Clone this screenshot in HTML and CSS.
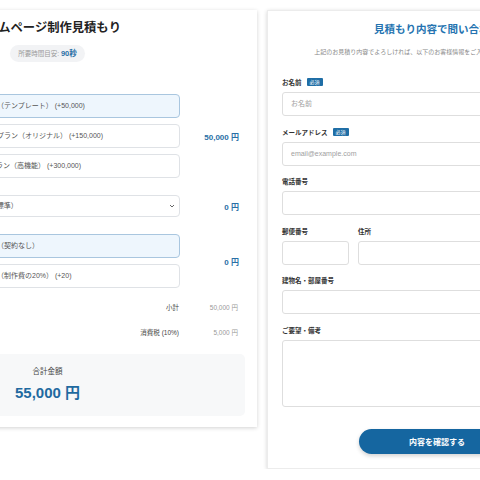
FILE: index.html
```html
<!DOCTYPE html>
<html lang="ja">
<head>
    <meta charset="UTF-8">
    <meta name="viewport" content="width=device-width, initial-scale=1.0">
    <title>ホームページ制作見積もり</title>
    <link rel="stylesheet" href="styles.css">
</head>
<body>
    <div class="page">
        <section class="card estimate">
            <header class="estimateHead">
                <h1>ホームページ制作見積もり</h1>
                <span class="timeBadge">所要時間目安: <b>90秒</b></span>
            </header>

            <div class="group">
                <div class="groupLabel">制作プラン</div>
                <div class="options">
                    <div class="option selected">ライトプラン（テンプレート） (+50,000)</div>
                    <div class="option">スタンダードプラン（オリジナル） (+150,000)</div>
                    <div class="option">プレミアムプラン（高機能） (+300,000)</div>
                </div>
                <div class="price">50,000 円</div>
            </div>

            <div class="group">
                <div class="groupLabel">スマホ対応</div>
                <div class="options">
                    <div class="option selectBox">
                        <span>スマホ対応（標準）</span>
                        <svg class="chevron" width="6" height="4" viewBox="0 0 6 4"><path d="M1 1l2 2 2-2" fill="none" stroke="#555" stroke-width="0.9"/></svg>
                    </div>
                </div>
                <div class="price">0 円</div>
            </div>

            <div class="group">
                <div class="groupLabel">保守・運用</div>
                <div class="options">
                    <div class="option selected">保守サポート（契約なし）</div>
                    <div class="option">月額保守契約（制作費の20%） (+20)</div>
                </div>
                <div class="price">0 円</div>
            </div>

            <div class="summary">
                <div class="sumRow"><span class="sumLabel">小計</span><span class="sumValue">50,000 円</span></div>
                <div class="sumRow"><span class="sumLabel">消費税 (10%)</span><span class="sumValue">5,000 円</span></div>
            </div>

            <div class="totalBox">
                <div class="totalLabel">合計金額</div>
                <div class="totalValue">55,000 円</div>
            </div>
        </section>

        <section class="card contact">
            <h2>見積もり内容で問い合わせ</h2>
            <p class="lead">上記のお見積り内容でよろしければ、以下のお客様情報をご入力のうえ送信してください。</p>

            <div class="field">
                <label>お名前 <span class="req">必須</span></label>
                <div class="input placeholder">お名前</div>
            </div>
            <div class="field">
                <label>メールアドレス <span class="req">必須</span></label>
                <div class="input placeholder">email@example.com</div>
            </div>
            <div class="field">
                <label>電話番号</label>
                <div class="input"></div>
            </div>
            <div class="fieldRow">
                <div class="field zip">
                    <label>郵便番号</label>
                    <div class="input"></div>
                </div>
                <div class="field address">
                    <label>住所</label>
                    <div class="input"></div>
                </div>
            </div>
            <div class="field">
                <label>建物名・部屋番号</label>
                <div class="input"></div>
            </div>
            <div class="field">
                <label>ご要望・備考</label>
                <div class="input textarea"></div>
            </div>

            <div class="actions">
                <button type="button" class="confirmBtn">内容を確認する</button>
            </div>
        </section>
    </div>
</body>
</html>
```

FILE: styles.css
```css
html, body {
    margin: 0;
    overflow: hidden;
    background-color: #ffffff;
}
body {
    font-family: "Liberation Sans", "Noto Sans CJK JP", sans-serif;
    color: #333;
}
.page {
    display: flex;
    align-items: flex-start;
    gap: 10px;
    padding-top: 10px;
    margin-left: -162px;
    width: 800px;
}
.card {
    background-color: #ffffff;
    box-shadow: 0 1px 4px rgba(0, 0, 0, 0.18);
    box-sizing: border-box;
    flex-shrink: 0;
}

/* Estimate card */
.estimate {
    width: 419px;
    padding: 10px 12px 11px;
}
.estimateHead {
    text-align: center;
}
.estimateHead h1 {
    margin: 0;
    font-size: 12.3px;
    line-height: 17px;
    font-weight: 600;
    color: #222;
}
.timeBadge {
    display: inline-block;
    margin-top: 8px;
    height: 17px;
    line-height: 17px;
    padding: 0 8px;
    border-radius: 9px;
    background-color: #f2f3f5;
    font-size: 6.5px;
    color: #999;
}
.timeBadge b {
    color: #2a6fa6;
    font-size: 7.5px;
}
.group {
    display: grid;
    grid-template-columns: 90px 234px 58px;
    column-gap: 6px;
    align-items: center;
    margin-top: 17px;
}
.group:first-of-type {
    margin-top: 32px;
}
.groupLabel {
    font-size: 7px;
    font-weight: 600;
    color: #333;
}
.options {
    display: flex;
    flex-direction: column;
    gap: 6px;
}
.option {
    height: 24px;
    line-height: 22px;
    box-sizing: border-box;
    border: 1px solid #dfe2e6;
    border-radius: 4px;
    padding: 0 8px;
    font-size: 7px;
    color: #555;
    white-space: nowrap;
    overflow: hidden;
}
.option.selected {
    background-color: #eef6fd;
    border-color: #a9c6df;
}
.selectBox {
    height: 22px;
    line-height: 20px;
    display: flex;
    justify-content: space-between;
    align-items: center;
    padding-right: 4px;
}
.price {
    text-align: right;
    padding-right: 5px;
    font-size: 8px;
    font-weight: 600;
    color: #2a6fa6;
}
.summary {
    margin-top: 13px;
    display: flex;
    flex-direction: column;
    gap: 11px;
}
.sumRow {
    display: flex;
    justify-content: flex-end;
    padding-right: 7px;
    height: 14px;
    line-height: 14px;
    font-size: 6.5px;
}
.sumLabel {
    color: #444;
}
.sumValue {
    width: 59px;
    text-align: right;
    color: #999;
}
.totalBox {
    margin-top: 14px;
    height: 62px;
    box-sizing: border-box;
    padding-top: 12px;
    background-color: #f7f8f9;
    border-radius: 5px;
    text-align: center;
}
.totalLabel {
    font-size: 7.5px;
    line-height: 12px;
    color: #444;
}
.totalValue {
    margin-top: 5px;
    font-size: 15px;
    line-height: 20px;
    font-weight: 700;
    color: #1f6aa0;
}

/* Contact card */
.contact {
    width: 340px;
    padding: 10px 14px 14px;
    border: 1px solid #ececec;
}
.contact h2 {
    margin: 0;
    text-align: center;
    font-size: 10.5px;
    line-height: 16px;
    font-weight: 700;
    color: #2473b0;
}
.lead {
    margin: 11px 0 0;
    text-align: center;
    font-size: 6px;
    line-height: 9px;
    color: #888;
    white-space: nowrap;
}
.field {
    margin-top: 10.5px;
}
.lead + .field {
    margin-top: 20px;
}
.field label {
    display: flex;
    align-items: center;
    gap: 5px;
    height: 10px;
    font-size: 6.5px;
    font-weight: 600;
    color: #333;
    margin-bottom: 5px;
}
.req {
    background-color: #1f6ea6;
    color: #fff;
    font-size: 5px;
    line-height: 8px;
    padding: 0 3px;
    border-radius: 1px;
    font-weight: 400;
}
.input {
    height: 24px;
    box-sizing: border-box;
    border: 1px solid #dedede;
    border-radius: 3px;
    padding: 0 8px;
    font-size: 7px;
    line-height: 22px;
}
.placeholder {
    color: #a0a0a0;
}
.textarea {
    height: 67px;
}
.fieldRow {
    display: flex;
    gap: 9px;
}
.fieldRow .field {
    margin-top: 10.5px;
}
.zip {
    width: 67px;
}
.address {
    flex: 1;
}
.actions {
    margin-top: 22px;
    display: flex;
    justify-content: center;
}
.confirmBtn {
    width: 156px;
    height: 25px;
    border: none;
    border-radius: 13px;
    background-color: #1566a0;
    color: #fff;
    font-family: "Noto Sans CJK JP", sans-serif;
    font-size: 8px;
    font-weight: 700;
    box-shadow: 0 2px 4px rgba(0, 0, 0, 0.18);
    cursor: pointer;
}
```
